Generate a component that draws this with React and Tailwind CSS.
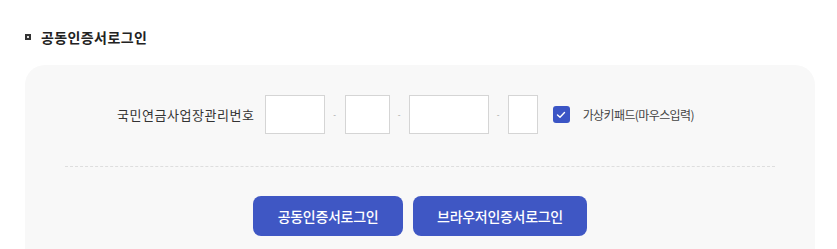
export default function App() {
  const font = { fontFamily: '"Noto Sans CJK KR", "Noto Sans", sans-serif' };
  return (
    <div className="w-[837px] h-[249px] overflow-hidden bg-white" style={font}>
      <div className="pl-[25px] pt-[27px] flex items-center gap-[10px]">
        <span className="w-[6px] h-[6px] border-[2px] border-[#333] bg-[#ddd]" />
        <h2 className="text-[14px] font-semibold text-[#222] tracking-[0.4px] leading-[20px]">공동인증서로그인</h2>
      </div>
      <div className="ml-[25px] mt-[18px] w-[790px] h-[220px] rounded-[20px] bg-[#f8f8f8] px-[40px] pt-[30px]">
        <div className="flex items-center pl-[52px] h-[39px]">
          <span className="text-[13px] text-[#333] tracking-[0.55px] mr-[10px]">국민연금사업장관리번호</span>
          <input className="w-[60px] h-[39px] bg-white border border-[#d5d5d5]" />
          <span className="w-[20px] text-center text-[8px] text-[#999]">-</span>
          <input className="w-[45px] h-[39px] bg-white border border-[#d5d5d5]" />
          <span className="w-[19px] text-center text-[8px] text-[#999]">-</span>
          <input className="w-[80px] h-[39px] bg-white border border-[#d5d5d5]" />
          <span className="w-[19px] text-center text-[8px] text-[#999]">-</span>
          <input className="w-[30px] h-[39px] bg-white border border-[#d5d5d5]" />
          <span className="ml-[15px] w-[17px] h-[17px] rounded-[3px] bg-[#3b55c5] flex items-center justify-center">
            <svg width="10" height="8" viewBox="0 0 10 8" fill="none">
              <path d="M1.5 4 L4 6.3 L8.5 1.5" stroke="white" strokeWidth="1.4" strokeLinecap="round" strokeLinejoin="round" />
            </svg>
          </span>
          <span className="ml-[13px] text-[12px] text-[#444] tracking-[-0.6px]">가상키패드(마우스입력)</span>
        </div>
        <div className="mt-[32px] border-t border-dashed border-[#dedede]" />
        <div className="mt-[29px] flex justify-center gap-[10px]">
          <button className="w-[150px] h-[40px] rounded-[8px] bg-[#3f57c4] text-white text-[14px] font-medium tracking-[-0.3px]">공동인증서로그인</button>
          <button className="w-[174px] h-[40px] rounded-[8px] bg-[#3f57c4] text-white text-[14px] font-medium tracking-[-0.3px]">브라우저인증서로그인</button>
        </div>
      </div>
    </div>
  );
}
